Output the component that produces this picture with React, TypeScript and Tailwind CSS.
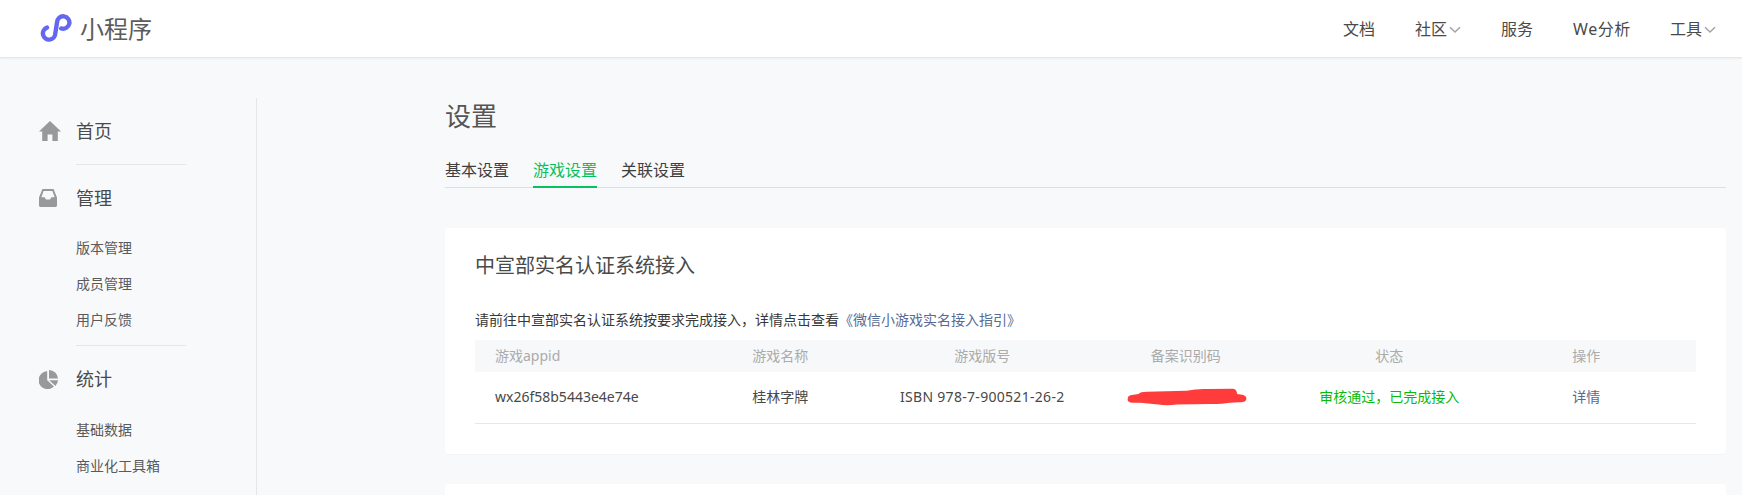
const cols = ["游戏名称", "游戏版号", "备案识别码", "状态"];

function Logo() {
  return (
    <svg width="32" height="29" viewBox="0 0 32 29" fill="none" className="shrink-0">
      <path
        d="M7 13.6A6.2 6.2 0 1 0 15.3 19.5L17 8.5A6.2 6.2 0 1 1 21.2 14.4"
        stroke="#6467f0"
        strokeWidth="4.4"
        strokeLinecap="round"
      />
    </svg>
  );
}

function Chevron() {
  return (
    <svg width="14" height="8" viewBox="0 0 14 8" fill="none" className="mt-[3px]">
      <path d="M3 1.2L8 6L13 1.2" stroke="#a3a3a3" strokeWidth="1.5" />
    </svg>
  );
}

function HomeIcon() {
  return (
    <svg width="22" height="20" viewBox="0 0 22 20" fill="#999999">
      <path d="M11 0L22 10.6H18.8V20H13.4V13.4H8.6V20H3.2V10.6H0Z" />
    </svg>
  );
}

function InboxIcon() {
  return (
    <svg width="18" height="18" viewBox="0 0 18 18" fill="#999999">
      <path
        fillRule="evenodd"
        d="M3.4 0H14.6L18 8.5V16.6C18 17.4 17.4 18 16.6 18H1.4C.6 18 0 17.4 0 16.6V8.5ZM4.6 2L2.4 8.2H5.6L7 10.6H11L12.4 8.2H15.6L13.4 2Z"
      />
    </svg>
  );
}

function PieIcon() {
  return (
    <svg width="19" height="19" viewBox="0 0 19 19" fill="#999999">
      <path d="M8.2 1.2V10.3L14.9 16.6A9 9 0 1 1 8.2 1.2Z" />
      <path d="M10 0A9 9 0 0 1 19 8.6H10Z" />
      <path d="M10.2 10.3H19A9 9 0 0 1 16.4 15.9Z" />
    </svg>
  );
}

function Scribble() {
  return (
    <svg width="120" height="18" viewBox="50 34 362 54" fill="#ff3b3b" className="mx-auto">
      <path d="M60 56L85 52Q90 45 110 45L230 42Q260 36 290 37L370 36Q382 38 382 52L398 54Q412 58 410 68Q408 78 390 77L360 78Q340 82 300 82L200 84Q170 88 145 84L90 78L65 78Q50 76 52 66Q52 58 60 56Z" />
    </svg>
  );
}

function SideHead({ icon, label }: { icon: React.ReactNode; label: string }) {
  return (
    <div className="flex items-center h-[36px]">
      <div className="w-[76px] pl-[39px] flex items-center">{icon}</div>
      <span className="text-[18px] text-[#4a4a4a]">{label}</span>
    </div>
  );
}

function SideLink({ label }: { label: string }) {
  return <div className="pl-[76px] h-[36px] leading-[36px] text-[14px] text-[#5a5a5a]">{label}</div>;
}

export default function App() {
  return (
    <div className="h-[495px] overflow-hidden bg-[#f8f9fb] font-['Noto_Sans','Noto_Sans_CJK_SC',sans-serif]">
      <header className="h-[58px] bg-white flex items-center pl-[40px] pr-[26px] justify-between border-b border-[#e7e7e7] shadow-[0_1px_2px_rgba(0,0,0,0.05)]">
        <div className="flex items-center gap-[8px]">
          <Logo />
          <span className="text-[24px] text-[#5c5c5c]">小程序</span>
        </div>
        <nav className="flex items-center gap-[40px] text-[16px] text-[#4a4a4a]">
          <a>文档</a>
          <a className="flex items-center">
            社区
            <Chevron />
          </a>
          <a>服务</a>
          <a className="w-[57px] whitespace-nowrap tracking-[0.6px]">We分析</a>
          <a className="flex items-center">
            工具
            <Chevron />
          </a>
        </nav>
      </header>

      <div className="flex">
        <aside className="mt-[40px] w-[257px] h-[400px] shrink-0 border-r border-[#e5e6e8] pt-[15px]">
          <SideHead icon={<HomeIcon />} label="首页" />
          <div className="ml-[76px] w-[110px] h-px bg-[#e5e6e8] mt-[15px] mb-[15px]" />
          <SideHead icon={<InboxIcon />} label="管理" />
          <div className="pt-[14px]">
            <SideLink label="版本管理" />
            <SideLink label="成员管理" />
            <SideLink label="用户反馈" />
          </div>
          <div className="ml-[76px] w-[110px] h-px bg-[#e5e6e8] mt-[7px] mb-[15px]" />
          <SideHead icon={<PieIcon />} label="统计" />
          <div className="pt-[15px]">
            <SideLink label="基础数据" />
            <SideLink label="商业化工具箱" />
          </div>
        </aside>

        <main className="flex-1 pl-[188px] pr-[16px]">
          <h1 className="mt-[40px] h-[36px] leading-[36px] text-[26px] text-[#555555]">设置</h1>
          <div className="mt-[20px] flex gap-[24px] h-[34px] border-b border-[#dddfe2]">
            <a className="text-[16px] leading-[32px] text-[#3f3f3f]">基本设置</a>
            <a className="h-[34px] text-[16px] leading-[32px] text-[#07c160] border-b-2 border-[#07c160]">游戏设置</a>
            <a className="text-[16px] leading-[32px] text-[#3f3f3f]">关联设置</a>
          </div>

          <section className="mt-[40px] h-[226px] bg-white rounded-[4px] px-[30px] shadow-[0_1px_1px_rgba(0,0,0,0.02)]">
            <h2 className="pt-[23px] h-[53px] text-[20px] leading-[30px] text-[#4a4a4a]">中宣部实名认证系统接入</h2>
            <p className="mt-[28px] h-[31px] text-[14px] leading-[22px] text-[#383838]">
              请前往中宣部实名认证系统按要求完成接入，详情点击查看
              <a className="text-[#576b95]">《微信小游戏实名接入指引》</a>
            </p>
            <div className="grid grid-cols-6 h-[32px] pb-[2px] items-center bg-[#f7f8fa] text-[14px] text-[#ababab] text-center">
              <div className="text-left pl-[20px]">游戏appid</div>
              <div>{cols[0]}</div>
              <div className="pr-[3px]">{cols[1]}</div>
              <div className="pr-[3px]">{cols[2]}</div>
              <div className="pr-[3px]">{cols[3]}</div>
              <div className="pr-[16px]">操作</div>
            </div>
            <div className="grid grid-cols-6 h-[52px] pb-[2px] items-center border-b border-[#e7e7e7] text-[14px] text-[#484848] text-center">
              <div className="text-left pl-[20px]">wx26f58b5443e4e74e</div>
              <div>桂林字牌</div>
              <div className="pr-[3px] tracking-[0.3px]">ISBN 978-7-900521-26-2</div>
              <div>
                <Scribble />
              </div>
              <div className="pr-[3px] text-[#09bb07]">审核通过，已完成接入</div>
              <div className="pr-[16px] text-[#576b95]">详情</div>
            </div>
          </section>

          <section className="mt-[30px] h-[40px] bg-white rounded-[4px]" />
        </main>
      </div>
    </div>
  );
}
